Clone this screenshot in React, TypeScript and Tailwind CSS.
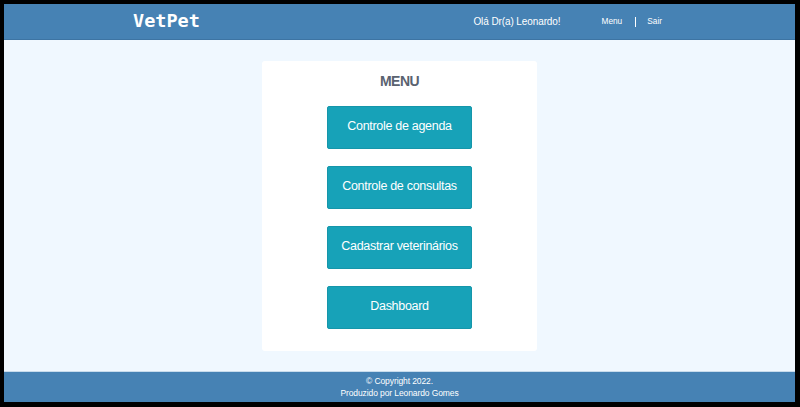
import React from 'react';

const sans = { fontFamily: '"Liberation Sans", Arial, sans-serif' };

const items = [
  'Controle de agenda',
  'Controle de consultas',
  'Cadastrar veterinários',
  'Dashboard',
];

const App = () => {
  return (
    <div className="w-[800px] h-[407px] bg-black pt-[4px] pl-[4px] pr-[5px] pb-[5px]">
      <div className="flex flex-col h-full bg-[#f0f8ff]" style={sans}>
        {/* Header */}
        <header className="h-[36px] shrink-0 bg-[#4682b4] border-b border-[#3d74a3]">
          <div className="flex items-center h-full pl-[129px] pr-[133px]">
            <span className="text-[18.5px] font-bold text-white font-['DejaVu_Sans_Mono',monospace] leading-none">
              VetPet
            </span>
            <span className="ml-auto text-[10px] tracking-[-0.1px] text-white">Olá Dr(a) Leonardo!</span>
            <nav className="flex items-center ml-[41px] text-[8.3px] text-white">
              <a className="cursor-pointer">Menu</a>
              <span className="ml-[13px] mr-[11px] w-px h-[10px] bg-white" />
              <a className="cursor-pointer">Sair</a>
            </nav>
          </div>
        </header>

        {/* Content */}
        <main className="flex-1 flex justify-center pt-[21px]">
          <div className="w-[275px] h-[290px] bg-white rounded-[3px] flex flex-col items-center pt-[11px]">
            <h1 className="text-[14px] tracking-[-0.5px] font-bold text-[#5a6270] leading-[18px]">MENU</h1>
            <div className="flex flex-col gap-[17px] mt-[16px]">
              {items.map((item) => (
                <button
                  key={item}
                  className="w-[145px] h-[43px] bg-[#17a2b8] border border-[#1596aa] rounded-[2px] text-white text-[12.5px] tracking-[-0.3px] pb-[2px]"
                >
                  {item}
                </button>
              ))}
            </div>
          </div>
        </main>

        {/* Footer */}
        <footer className="h-[31px] shrink-0 bg-[#4682b4] border-t border-[#c8dcec] flex flex-col items-center justify-center text-white text-[8.5px] tracking-[-0.1px] leading-[12px]">
          <p>© Copyright 2022.</p>
          <p>Produzido por Leonardo Gomes</p>
        </footer>
      </div>
    </div>
  );
};

export default App;
